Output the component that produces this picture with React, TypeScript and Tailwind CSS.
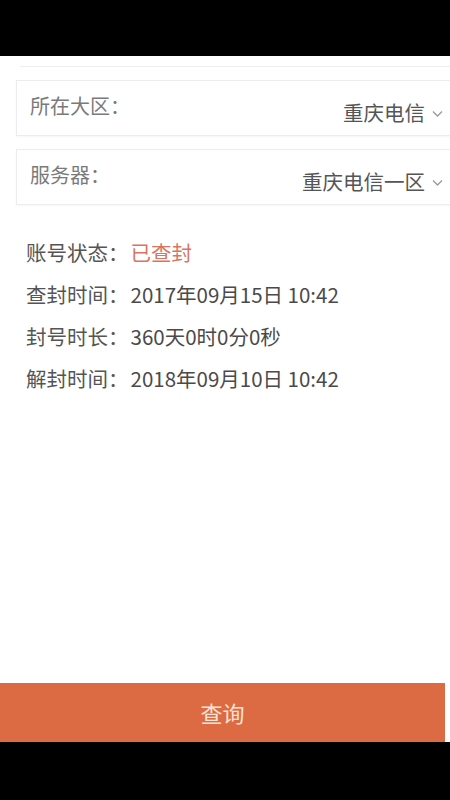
import React from "react";

const font = { fontFamily: '"Noto Sans CJK SC", "Noto Sans", sans-serif' };

function Chevron() {
  return (
    <svg width="11" height="8" viewBox="0 0 11 8" className="ml-[7px] mt-[3px]">
      <path d="M1 1.5 L5.5 6 L10 1.5" fill="none" stroke="#9a9a9a" strokeWidth="1.3" />
    </svg>
  );
}

function SelectRow({ label, value }: { label: string; value: string }) {
  return (
    <div className="ml-4 flex h-[56px] items-center justify-between border border-r-0 border-[#ececec] bg-white pl-[13px] pr-[7px] shadow-[0_1px_2px_rgba(0,0,0,0.04)]">
      <span className="-mt-[4px] text-[20px] text-[#7a7a7a]">{label}</span>
      <span className="mt-[8px] flex items-center text-[20.5px] text-[#555]">
        {value}
        <Chevron />
      </span>
    </div>
  );
}

function InfoRow({ label, value, red }: { label: string; value: string; red?: boolean }) {
  return (
    <div className="flex h-[42px] items-center text-[20.5px]">
      <span className="text-[#555]">{label}</span>
      <span className={red ? "ml-[2px] text-[#da735f]" : "ml-[2px] text-[#4a4a4a]"}>{value}</span>
    </div>
  );
}

export default function App() {
  return (
    <div className="flex h-[800px] w-[450px] flex-col bg-black" style={font}>
      <div className="h-[56px] shrink-0 bg-black" />
      <div className="flex flex-1 flex-col bg-white">
        <div className="ml-[20px] mt-[10px] h-px bg-[#eeeeee]" />
        <div className="mt-[13px] flex flex-col gap-[13px]">
          <SelectRow label="所在大区：" value="重庆电信" />
          <SelectRow label="服务器：" value="重庆电信一区" />
        </div>
        <div className="ml-[26px] mt-[26px] flex flex-col">
          <InfoRow label="账号状态：" value="已查封" red />
          <InfoRow label="查封时间：" value="2017年09月15日 10:42" />
          <InfoRow label="封号时长：" value="360天0时0分0秒" />
          <InfoRow label="解封时间：" value="2018年09月10日 10:42" />
        </div>
        <div className="flex-1" />
        <div className="mr-[5px] flex h-[59px] items-center justify-center bg-[#dc6b43]">
          <span className="text-[22px] text-[#fde3d6]">查询</span>
        </div>
      </div>
      <div className="h-[58px] shrink-0 bg-black" />
    </div>
  );
}
